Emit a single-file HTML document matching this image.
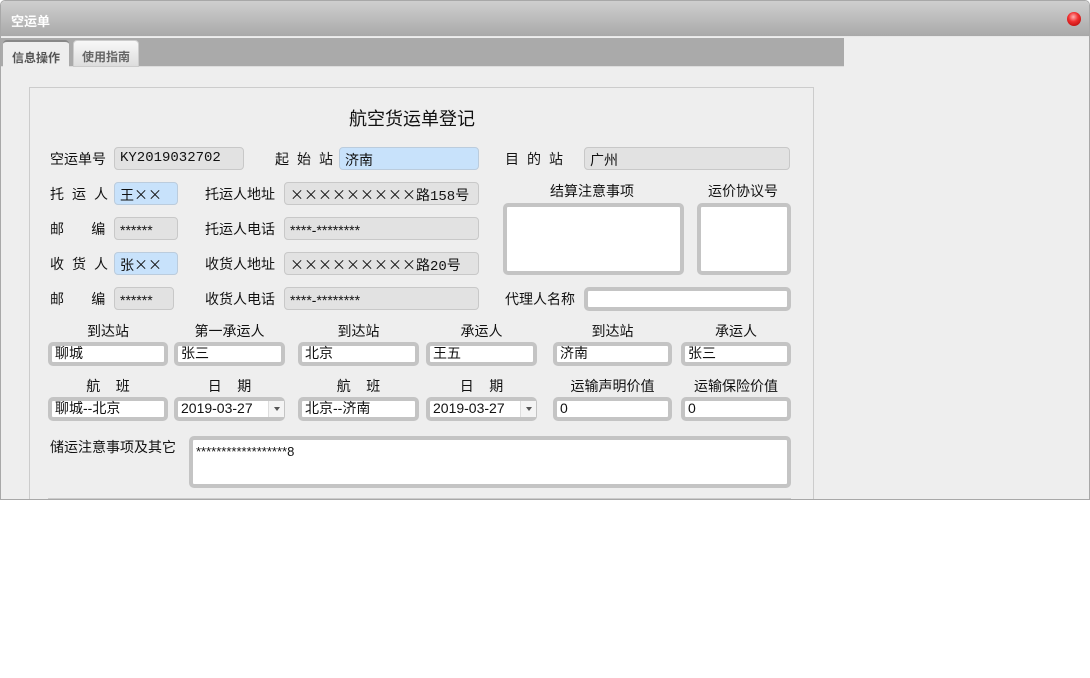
<!DOCTYPE html>
<html><head><meta charset="utf-8">
<style>
*{box-sizing:border-box;margin:0;padding:0}
body{width:1090px;height:678px;background:#fff;font-family:"Liberation Sans","Noto Sans CJK SC",sans-serif;font-size:14px;color:#111;position:relative;overflow:hidden}
.win{position:absolute;left:0;top:0;width:1090px;height:500px;background:#eee;border:1px solid #a8a8a8;border-radius:5px 5px 0 0;overflow:hidden}
.title{position:absolute;left:0;top:0;width:1090px;height:36px;background:linear-gradient(#cfcfcf,#a9a9a9);border-bottom:1px solid #e8e8e8}
.title span{position:absolute;left:10px;top:10px;color:#fff;font-weight:bold;font-size:13px}
.close{position:absolute;left:1066px;top:11px;width:14px;height:14px;border-radius:50%;background:radial-gradient(circle at 45% 35%,#ffb0b0 0,#f03030 40%,#a00 100%)}
.tabs{position:absolute;left:0;top:37px;width:843px;height:29px;background:#aaa;border-bottom:1px solid #ddd}
.tab{position:absolute;top:2px;height:27px;font-size:12px;font-weight:bold;color:#666;padding-top:7px;text-align:center;border-radius:4px 4px 0 0}
.t1{left:2px;width:66px;background:#eee;color:#555;border-top:2px solid #888}
.t2{left:72px;width:66px;background:linear-gradient(#f8f8f8,#ddd);border:1px solid #ccc}
.panel{position:absolute;left:28px;top:86px;width:785px;height:420px;border:1px solid #ccc;background:#eee}
.a{position:absolute;white-space:nowrap}
.ls{letter-spacing:8px}
.g{position:absolute;height:23px;background:#e2e2e2;border:1px solid #c8c8c8;border-radius:4px;padding:2px 0 0 5px;font-family:"Liberation Mono","Noto Sans CJK SC",monospace;font-size:14px}
.x{font-family:"Noto Sans CJK SC",sans-serif}
.st{font-family:"Liberation Sans",sans-serif;font-size:14px;padding-top:4px}
.b{background:#c8e2fb;border-color:#bcd}
.w{position:absolute;background:#fff;border:4px solid #c4c4c4;border-radius:5px;padding:0 0 0 3px;font-size:14px;line-height:15px}
.c{text-align:center}
.arr{position:absolute;right:0;top:0;width:16px;height:100%;background:#f4f4f4;border-left:1px solid #ddd}
.arr:after{content:"";position:absolute;left:5px;top:6px;border:3px solid transparent;border-top:4px solid #555}
</style></head><body>
<div class="win">
<div class="title"><span>空运单</span><div class="close"></div></div>
<div class="tabs"><div class="tab t1">信息操作</div><div class="tab t2">使用指南</div></div>
<div class="panel"></div>
</div>
<div class="a" style="left:349px;top:105px;font-size:18px">航空货运单登记</div>

<div class="a" style="left:50px;top:149px">空运单号</div>
<div class="g" style="left:114px;top:147px;width:130px">KY2019032702</div>
<div class="a ls" style="left:275px;top:149px">起始站</div>
<div class="g b" style="left:339px;top:147px;width:140px">济南</div>
<div class="a ls" style="left:505px;top:149px">目的站</div>
<div class="g" style="left:584px;top:147px;width:206px">广州</div>

<div class="a ls" style="left:50px;top:184px">托运人</div>
<div class="g b" style="left:114px;top:182px;width:64px">王<span class="x">××</span></div>
<div class="a" style="left:205px;top:184px">托运人地址</div>
<div class="g" style="left:284px;top:182px;width:195px"><span class="x">×××××××××</span>路158号</div>

<div class="a" style="left:50px;top:219px">邮&nbsp;&nbsp;&nbsp;&nbsp;&nbsp;&nbsp;&nbsp;编</div>
<div class="g st" style="left:114px;top:217px;width:64px">******</div>
<div class="a" style="left:205px;top:219px">托运人电话</div>
<div class="g st" style="left:284px;top:217px;width:195px">****-********</div>

<div class="a ls" style="left:50px;top:254px">收货人</div>
<div class="g b" style="left:114px;top:252px;width:64px">张<span class="x">××</span></div>
<div class="a" style="left:205px;top:254px">收货人地址</div>
<div class="g" style="left:284px;top:252px;width:195px"><span class="x">×××××××××</span>路20号</div>

<div class="a" style="left:50px;top:289px">邮&nbsp;&nbsp;&nbsp;&nbsp;&nbsp;&nbsp;&nbsp;编</div>
<div class="g st" style="left:114px;top:287px;width:60px">******</div>
<div class="a" style="left:205px;top:289px">收货人电话</div>
<div class="g st" style="left:284px;top:287px;width:195px">****-********</div>

<div class="a" style="left:550px;top:181px">结算注意事项</div>
<div class="w" style="left:503px;top:203px;width:181px;height:72px"></div>
<div class="a" style="left:708px;top:181px">运价协议号</div>
<div class="w" style="left:697px;top:203px;width:94px;height:72px"></div>
<div class="a" style="left:505px;top:289px">代理人名称</div>
<div class="w" style="left:584px;top:287px;width:207px;height:24px"></div>

<div class="a c" style="left:48px;top:321px;width:120px">到达站</div>
<div class="a c" style="left:174px;top:321px;width:111px">第一承运人</div>
<div class="a c" style="left:298px;top:321px;width:121px">到达站</div>
<div class="a c" style="left:426px;top:321px;width:111px">承运人</div>
<div class="a c" style="left:553px;top:321px;width:119px">到达站</div>
<div class="a c" style="left:681px;top:321px;width:110px">承运人</div>
<div class="w" style="left:48px;top:342px;width:120px;height:24px">聊城</div>
<div class="w" style="left:174px;top:342px;width:111px;height:24px">张三</div>
<div class="w" style="left:298px;top:342px;width:121px;height:24px">北京</div>
<div class="w" style="left:426px;top:342px;width:111px;height:24px">王五</div>
<div class="w" style="left:553px;top:342px;width:119px;height:24px">济南</div>
<div class="w" style="left:681px;top:342px;width:110px;height:24px">张三</div>

<div class="a c" style="left:48px;top:376px;width:120px">航&nbsp;&nbsp;&nbsp;&nbsp;班</div>
<div class="a c" style="left:174px;top:376px;width:111px">日&nbsp;&nbsp;&nbsp;&nbsp;期</div>
<div class="a c" style="left:298px;top:376px;width:121px">航&nbsp;&nbsp;&nbsp;&nbsp;班</div>
<div class="a c" style="left:426px;top:376px;width:111px">日&nbsp;&nbsp;&nbsp;&nbsp;期</div>
<div class="a c" style="left:553px;top:376px;width:119px">运输声明价值</div>
<div class="a c" style="left:681px;top:376px;width:110px">运输保险价值</div>
<div class="w" style="left:48px;top:397px;width:120px;height:24px">聊城--北京</div>
<div class="w" style="left:174px;top:397px;width:111px;height:24px;border-right-width:1px">2019-03-27<div class="arr"></div></div>
<div class="w" style="left:298px;top:397px;width:121px;height:24px">北京--济南</div>
<div class="w" style="left:426px;top:397px;width:111px;height:24px;border-right-width:1px">2019-03-27<div class="arr"></div></div>
<div class="w" style="left:553px;top:397px;width:119px;height:24px">0</div>
<div class="w" style="left:681px;top:397px;width:110px;height:24px">0</div>

<div class="a" style="left:50px;top:437px">储运注意事项及其它</div>
<div class="w" style="left:189px;top:436px;width:602px;height:52px;padding-top:4px;font-size:13px">******************8</div>
<div class="a" style="left:48px;top:498px;width:743px;height:1px;background:#ccc"></div>
</body></html>
